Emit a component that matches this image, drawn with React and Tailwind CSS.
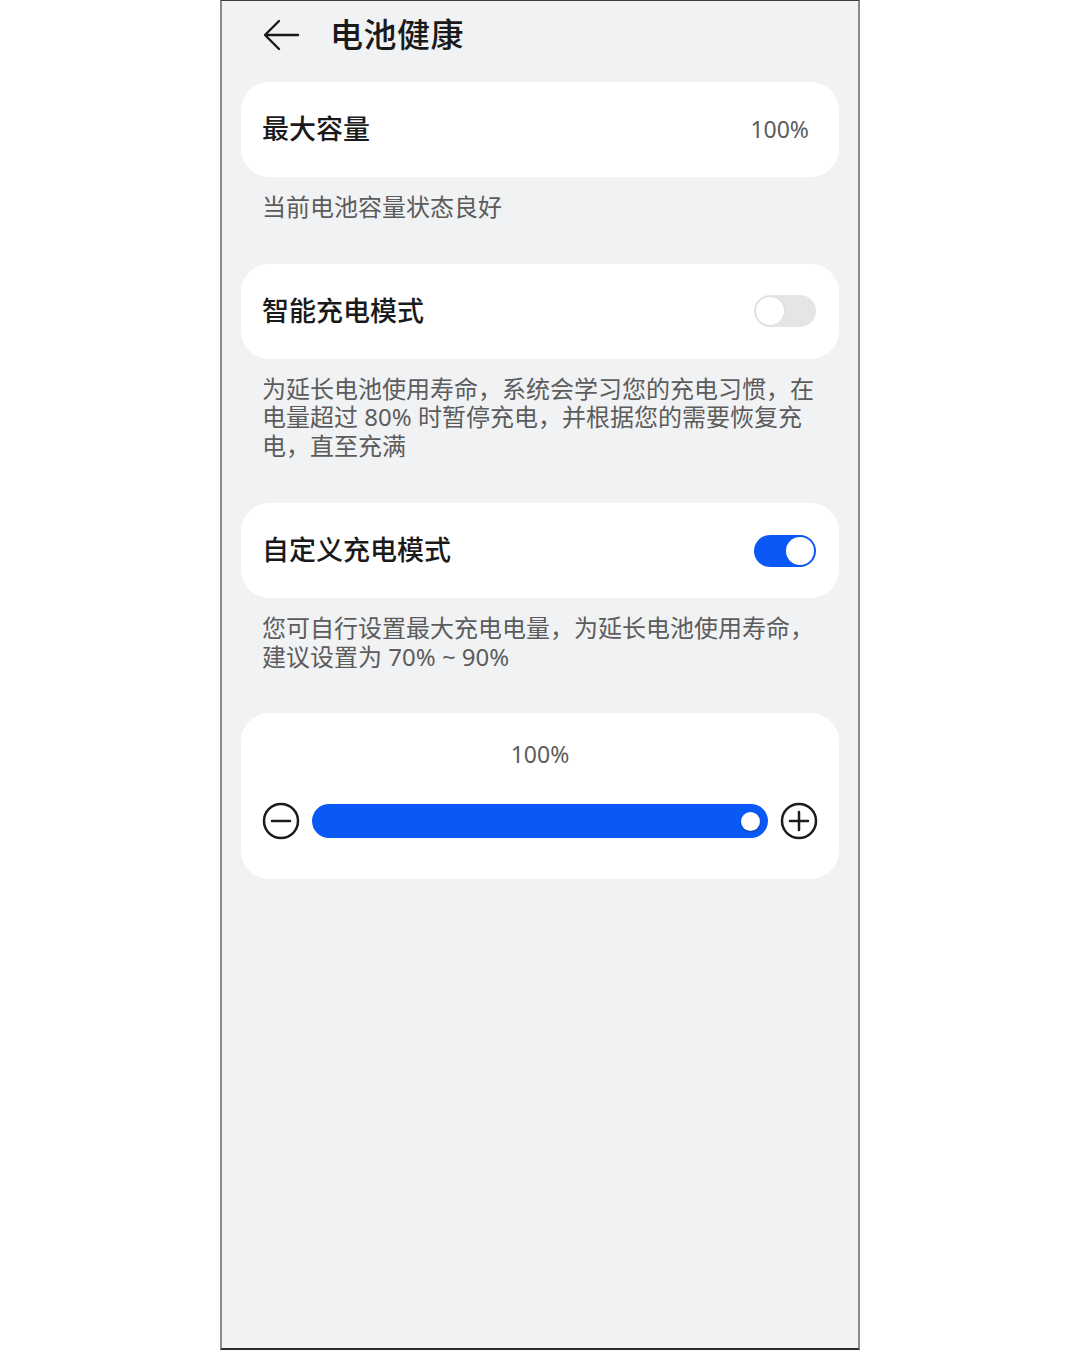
import React from "react";

const font = "font-['Noto_Sans','Noto_Sans_CJK_SC',sans-serif]";

function Toggle({ on }) {
  return (
    <div
      className={
        "relative w-[62px] h-[32px] rounded-full shrink-0 " +
        (on ? "bg-[#0a59f7]" : "bg-[#e5e5e5]")
      }
    >
      <div
        className={
          "absolute top-[2px] w-[28px] h-[28px] rounded-full bg-white " +
          (on ? "right-[2px]" : "left-[2px] shadow-[0_0_0_1px_#dcdcdc]")
        }
      />
    </div>
  );
}

function Card({ children, className = "" }) {
  return (
    <div className={"bg-white rounded-[28px] " + className}>{children}</div>
  );
}

function Caption({ children }) {
  return (
    <p className="px-[21px] mt-[16px] text-[24px] leading-[28.5px] text-[#5c5c5c]">
      {children}
    </p>
  );
}

function CircleIcon({ plus }) {
  return (
    <svg width="38" height="38" viewBox="0 0 38 38" className="shrink-0">
      <circle cx="19" cy="19" r="17" fill="none" stroke="#1c1c1c" strokeWidth="2.5" />
      <line x1="10" y1="19" x2="28" y2="19" stroke="#1c1c1c" strokeWidth="2.5" strokeLinecap="round" />
      {plus && (
        <line x1="19" y1="10" x2="19" y2="28" stroke="#1c1c1c" strokeWidth="2.5" strokeLinecap="round" />
      )}
    </svg>
  );
}

export default function App() {
  return (
    <div className={"w-full min-h-[1350px] bg-white flex justify-center " + font}>
      <div className="w-[640px] h-[1350px] bg-[#f1f2f4] border-x-2 border-x-[#8a8a8a] border-t border-t-[#3a3a3a] border-b-2 border-b-[#2a2a2a] px-[19px]">
        {/* header */}
        <div className="h-[67px] flex items-center pl-[21px]">
          <svg width="38" height="36" viewBox="0 0 38 36" className="shrink-0">
            <path
              d="M36 18H4M17 4L3 18l14 14"
              fill="none"
              stroke="#1a1a1a"
              strokeWidth="2.4"
              strokeLinecap="round"
              strokeLinejoin="round"
            />
          </svg>
          <h1 className="ml-[30px] text-[33px] font-medium text-[#1a1a1a] tracking-[0.5px]">
            电池健康
          </h1>
        </div>

        <Card className="mt-[14px] h-[95px] flex items-center justify-between pl-[21px] pr-[30px]">
          <span className="text-[27px] font-medium text-[#1a1a1a]">最大容量</span>
          <span className="text-[23px] text-[#5c5c5c]">100%</span>
        </Card>
        <Caption>当前电池容量状态良好</Caption>

        <Card className="mt-[42px] h-[95px] flex items-center justify-between pl-[21px] pr-[23px]">
          <span className="text-[27px] font-medium text-[#1a1a1a]">智能充电模式</span>
          <Toggle on={false} />
        </Card>
        <Caption>
          为延长电池使用寿命，系统会学习您的充电习惯，在电量超过 80% 时暂停充电，并根据您的需要恢复充电，直至充满
        </Caption>

        <Card className="mt-[43px] h-[95px] flex items-center justify-between pl-[21px] pr-[23px]">
          <span className="text-[27px] font-medium text-[#1a1a1a]">自定义充电模式</span>
          <Toggle on={true} />
        </Card>
        <Caption>
          您可自行设置最大充电电量，为延长电池使用寿命，建议设置为 70% ~ 90%
        </Caption>

        <Card className="mt-[42px] h-[166px] flex flex-col items-center pt-[24px] px-[21px]">
          <span className="text-[23px] leading-[34px] text-[#5c5c5c]">100%</span>
          <div className="mt-[31px] w-full flex items-center">
            <CircleIcon />
            <div className="ml-[12px] mr-[12px] flex-1 h-[34px] rounded-full bg-[#0a59f7] flex items-center justify-end pr-[8px]">
              <div className="w-[19px] h-[19px] rounded-full bg-white shadow-[0_1px_2px_rgba(0,0,0,0.35)]" />
            </div>
            <CircleIcon plus />
          </div>
        </Card>
      </div>
    </div>
  );
}
